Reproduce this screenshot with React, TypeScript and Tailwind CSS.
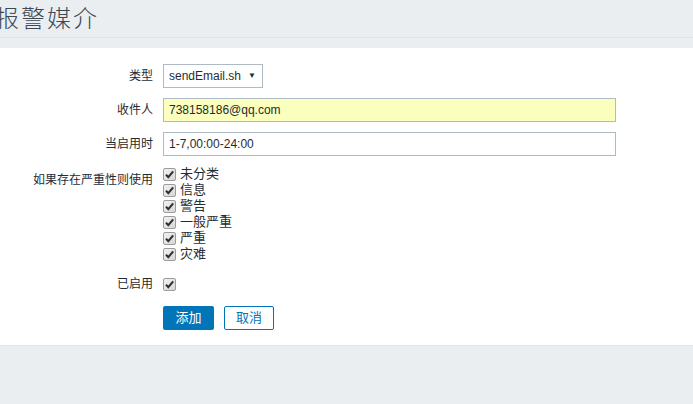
import React from "react";

const font = { fontFamily: "Arial, 'Liberation Sans', 'Noto Sans CJK SC', sans-serif" };

const severities = ["未分类", "信息", "警告", "一般严重", "严重", "灾难"];

const Check = () => (
  <svg width="13" height="13" viewBox="0 0 13 13" className="shrink-0">
    <defs>
      <linearGradient id="cbg" x1="0" y1="0" x2="1" y2="1">
        <stop offset="0" stopColor="#f4f4f4" />
        <stop offset="1" stopColor="#d4d4d4" />
      </linearGradient>
    </defs>
    <rect x="0.5" y="0.5" width="12" height="12" rx="1.5" fill="url(#cbg)" stroke="#9c9c9c" />
    <path d="M3 6.6 L5.3 9.2 L10.2 3.4" fill="none" stroke="#2e2e2e" strokeWidth="2" />
  </svg>
);

const App = () => {
  return (
    <div className="min-h-[404px] bg-[#ebeef0] text-[#1f2c33] overflow-hidden" style={font}>
      <header className="h-[38px] border-b border-[#dfe4e7] flex items-center">
        <h1 className="ml-[-5px] text-[24px] leading-none font-light text-[#3c4a56] tracking-[2px]">报警媒介</h1>
      </header>

      <main className="mt-[10px] bg-white border-b border-[#dfe4e7] pt-[16px] pb-[15px]">
        <div className="grid grid-cols-[153px_1fr] gap-x-[10px] text-[12px]">
          <label className="text-right self-center">类型</label>
          <div className="h-[24px] w-[100px] border border-[#acbbc4] flex items-center justify-between pl-[5px] pr-[6px]">
            <span>sendEmail.sh</span>
            <span className="text-[8px]">▼</span>
          </div>

          <label className="text-right self-center mt-[10px]">收件人</label>
          <div className="mt-[10px] h-[24px] w-[453px] border border-[#acbbc4] bg-[#faffbd] flex items-center px-[5px]">
            738158186@qq.com
          </div>

          <label className="text-right self-center mt-[10px]">当启用时</label>
          <div className="mt-[10px] h-[24px] w-[453px] border border-[#acbbc4] bg-white flex items-center px-[5px]">
            1-7,00:00-24:00
          </div>

          <label className="text-right mt-[10px] pt-[5px]">如果存在严重性则使用</label>
          <ul className="mt-[10px] flex flex-col">
            {severities.map((s) => (
              <li key={s} className="h-[16px] flex items-center gap-[4px]">
                <Check />
                <span className="text-[13px]">{s}</span>
              </li>
            ))}
          </ul>

          <label className="text-right mt-[14px] h-[16px] leading-[16px]">已启用</label>
          <div className="mt-[14px] h-[16px] flex items-center">
            <Check />
          </div>

          <div />
          <div className="mt-[14px] flex gap-[10px]">
            <button className="h-[24px] w-[51px] rounded-[2px] bg-[#0275b8] text-white text-[13px]">添加</button>
            <button className="h-[24px] w-[50px] rounded-[2px] border border-[#0275b8] bg-white text-[#0275b8] text-[13px]">取消</button>
          </div>
        </div>
      </main>
    </div>
  );
};

export default App;
